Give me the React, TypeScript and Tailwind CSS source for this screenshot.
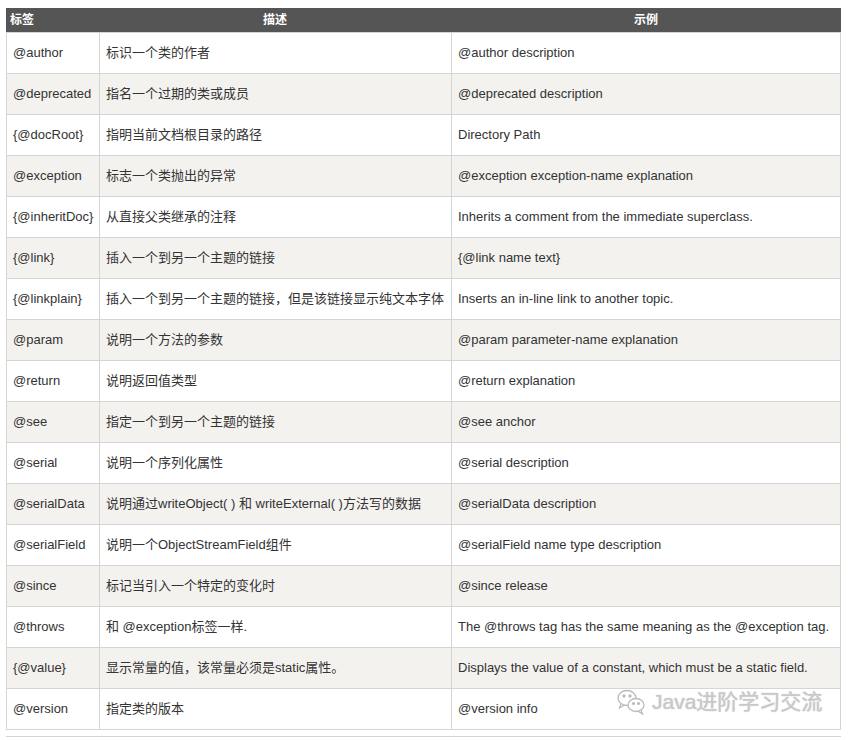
const rows: [string, string, string][] = [
  ["@author", "标识一个类的作者", "@author description"],
  ["@deprecated", "指名一个过期的类或成员", "@deprecated description"],
  ["{@docRoot}", "指明当前文档根目录的路径", "Directory Path"],
  ["@exception", "标志一个类抛出的异常", "@exception exception-name explanation"],
  ["{@inheritDoc}", "从直接父类继承的注释", "Inherits a comment from the immediate superclass."],
  ["{@link}", "插入一个到另一个主题的链接", "{@link name text}"],
  ["{@linkplain}", "插入一个到另一个主题的链接，但是该链接显示纯文本字体", "Inserts an in-line link to another topic."],
  ["@param", "说明一个方法的参数", "@param parameter-name explanation"],
  ["@return", "说明返回值类型", "@return explanation"],
  ["@see", "指定一个到另一个主题的链接", "@see anchor"],
  ["@serial", "说明一个序列化属性", "@serial description"],
  ["@serialData", "说明通过writeObject( ) 和 writeExternal( )方法写的数据", "@serialData description"],
  ["@serialField", "说明一个ObjectStreamField组件", "@serialField name type description"],
  ["@since", "标记当引入一个特定的变化时", "@since release"],
  ["@throws", "和 @exception标签一样.", "The @throws tag has the same meaning as the @exception tag."],
  ["{@value}", "显示常量的值，该常量必须是static属性。", "Displays the value of a constant, which must be a static field."],
  ["@version", "指定类的版本", "@version info"],
];

export default function App() {
  return (
    <div className="relative w-[848px] h-[740px] bg-white pt-[8px] pl-[6px] text-[#333] text-[13px]" style={{ fontFamily: '"Liberation Sans", "Noto Sans CJK SC", sans-serif' }}>
      <div className="w-[835px] border-b border-[#d5d5d5]">
        <div className="grid grid-cols-[93px_352px_1fr] h-[24px] bg-[#555] text-white text-[12px] font-bold items-center">
          <div className="pl-[4px]">标签</div>
          <div className="text-center">描述</div>
          <div className="text-center">示例</div>
        </div>
        {rows.map((r, i) => (
          <div key={i} className={`grid grid-cols-[93px_352px_1fr] h-[41px] border-l border-r border-t border-[#d5d5d5] ${i % 2 === 1 ? "bg-[#f3f2ef]" : "bg-white"}`}>
            <div className="flex items-center pl-[6px] border-r border-[#d5d5d5] whitespace-nowrap">{r[0]}</div>
            <div className="flex items-center pl-[6px] border-r border-[#d5d5d5] whitespace-nowrap">{r[1]}</div>
            <div className="flex items-center pl-[6px] whitespace-nowrap">{r[2]}</div>
          </div>
        ))}
      </div>
      <div className="w-[835px] mt-[6px] border-t border-[#d5d5d5]" />
      <div className="absolute left-[616px] top-[686px] flex items-center gap-[6px] text-[#c8c8c8] text-[21px]" style={{ textShadow: "0 0 2px #fff, 0 0 1px #888" }}>
        <svg width="30" height="28" viewBox="0 0 30 28" fill="none" stroke="#bbb" strokeWidth="1.3">
          <ellipse cx="11" cy="10" rx="9" ry="7.5" />
          <path d="M5 16 L3.5 20 L8.5 17" />
          <ellipse cx="20" cy="17" rx="8" ry="6.5" fill="#fff" />
          <path d="M25 22 L26.5 26 L22 23.2" />
          <circle cx="8" cy="8" r="1" fill="#bbb" />
          <circle cx="14" cy="8" r="1" fill="#bbb" />
          <circle cx="17.5" cy="15.5" r="0.9" fill="#bbb" />
          <circle cx="22.5" cy="15.5" r="0.9" fill="#bbb" />
        </svg>
        <span>Java进阶学习交流</span>
      </div>
    </div>
  );
}
